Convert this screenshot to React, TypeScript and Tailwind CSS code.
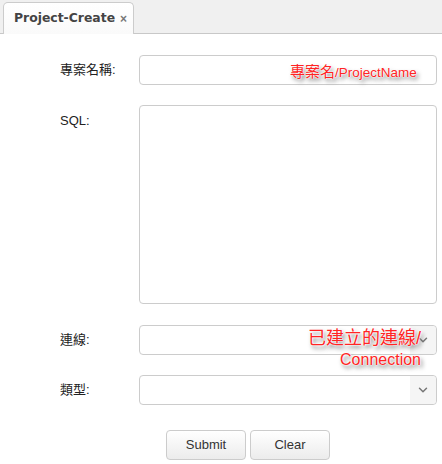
import { ChevronDown } from 'lucide-react'

const glow =
  '[text-shadow:0_0_1px_#fff,0_0_2px_#fff,0_0_2px_#fff,2px_3px_4px_#666]'

function SelectBox() {
  return (
    <div className="relative h-[30px] w-[298px] rounded-[4px] border border-[#ccc] bg-white">
      <div className="absolute right-0 top-0 flex h-full w-[26px] items-center justify-center rounded-r-[4px] bg-[#f5f5f5]">
        <ChevronDown className="h-[14px] w-[14px] text-[#777]" strokeWidth={2.5} />
      </div>
    </div>
  )
}

export default function App() {
  return (
    <div className="h-[464px] w-[442px] bg-white font-['Liberation_Sans','Noto_Sans_CJK_TC',sans-serif] text-[13px] text-[#222]">
      {/* tab strip */}
      <div className="flex h-[34px] items-end border-b border-[#c8c8c8] bg-[#f0f0f0] pl-[3px]">
        <div className="-mb-px flex h-[32px] w-[131px] items-center gap-[5px] rounded-t-[5px] border border-b-0 border-[#ccc] bg-gradient-to-b from-white to-[#fafafa] pl-[10px]">
          <span className="font-['DejaVu_Sans',sans-serif] text-[12.4px] font-bold text-[#444]">Project-Create</span>
          <span className="text-[12px] font-bold leading-none text-[#777]">×</span>
        </div>
      </div>

      <div className="relative pl-[60px] pt-[21px]">
        <div className="flex items-center">
          <span className="w-[79px]">專案名稱:</span>
          <div className="h-[30px] w-[298px] rounded-[4px] border border-[#ccc] bg-white" />
        </div>

        <div className="mt-[20px] flex items-start">
          <span className="w-[79px] pt-[6px]">SQL:</span>
          <div className="h-[199px] w-[298px] rounded-[4px] border border-[#ccc] bg-white" />
        </div>

        <div className="mt-[21px] flex items-center">
          <span className="w-[79px]">連線:</span>
          <SelectBox />
        </div>

        <div className="mt-[20px] flex items-center">
          <span className="w-[79px]">類型:</span>
          <SelectBox />
        </div>

        <div className="mt-[25px] flex gap-[4px] pl-[106px]">
          <button className="h-[30px] w-[80px] rounded-[4px] border border-[#ccc] bg-gradient-to-b from-white to-[#ececec] text-[13px] text-[#333]">
            Submit
          </button>
          <button className="h-[30px] w-[80px] rounded-[4px] border border-[#ccc] bg-gradient-to-b from-white to-[#ececec] text-[13px] text-[#333]">
            Clear
          </button>
        </div>

        {/* red annotations */}
        <div className={`absolute left-[290px] top-[27px] whitespace-nowrap text-[#ff2424] ${glow}`}>
          <span className="text-[15px]">專案名</span>
          <span className="text-[13.5px]">/ProjectName</span>
        </div>
        <div className={`absolute right-[21px] top-[294px] flex flex-col items-end leading-[21px] text-[#ff2424] ${glow}`}>
          <span className="text-[18px]">已建立的連線/</span>
          <span className="text-[16px]">Connection</span>
        </div>
      </div>
    </div>
  )
}
